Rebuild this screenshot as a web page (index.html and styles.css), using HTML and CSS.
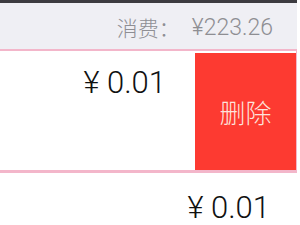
FILE: index.html
```html
<!DOCTYPE html>
<html lang="zh">
<head>
    <meta charset="UTF-8">
    <meta name="viewport" content="width=device-width, initial-scale=1.0">
    <title>消费</title>
    <link rel="stylesheet" href="styles.css">
</head>
<body>

<div class="page">
    <div class="top-bar"></div>

    <div class="summary">
        <span class="summary-label">消费：</span>
        <span class="summary-value">¥223.26</span>
    </div>

    <div class="item-row">
        <div class="item-main">
            <span class="price">¥ 0.01</span>
        </div>
        <div class="btn-delete">删除</div>
    </div>

    <div class="item-next">
        <span class="price">¥ 0.01</span>
    </div>
</div>

</body>
</html>
```

FILE: styles.css
```css
:root {
    --bar-color: #3c3b40;
    --header-bg: #efeff4;
    --border-pink: #f3b6ca;
    --delete-red: #fd3a31;
    --text-gray: #8e8e93;
}

body {
    margin: 0;
    background: #fff;
    font-family: Roboto, 'Liberation Sans', 'Noto Sans CJK SC', sans-serif;
}

.page {
    width: 297px;
    height: 225px;
    overflow: hidden;
}

.top-bar {
    height: 3px;
    background: var(--bar-color);
}

.summary {
    height: 46px;
    background: var(--header-bg);
    display: flex;
    justify-content: flex-end;
    align-items: center;
    padding: 2px 24px 0 0;
    color: var(--text-gray);
    font-size: 23px;
    font-weight: 300;
    box-sizing: border-box;
}

.summary-label {
    font-family: 'Noto Sans CJK SC', sans-serif;
    font-size: 21px;
    margin-right: 12px;
}

.item-row {
    display: flex;
    height: 124px;
    box-sizing: border-box;
    border-top: 2px solid var(--border-pink);
    border-bottom: 3px solid var(--border-pink);
    border-right: 1px solid var(--border-pink);
}

.item-main {
    flex: 1;
    text-align: right;
    padding: 14px 29px 0 0;
}

.price {
    font-size: 31px;
    font-weight: 300;
    color: #111;
    line-height: 36px;
}

.btn-delete {
    width: 101px;
    background: var(--delete-red);
    color: #fde3dc;
    font-family: 'Noto Sans CJK SC', sans-serif;
    font-size: 26px;
    font-weight: 300;
    display: flex;
    justify-content: center;
    align-items: center;
    margin-top: 2px;
}

.item-next {
    text-align: right;
    padding: 17px 27px 0 0;
}
```
